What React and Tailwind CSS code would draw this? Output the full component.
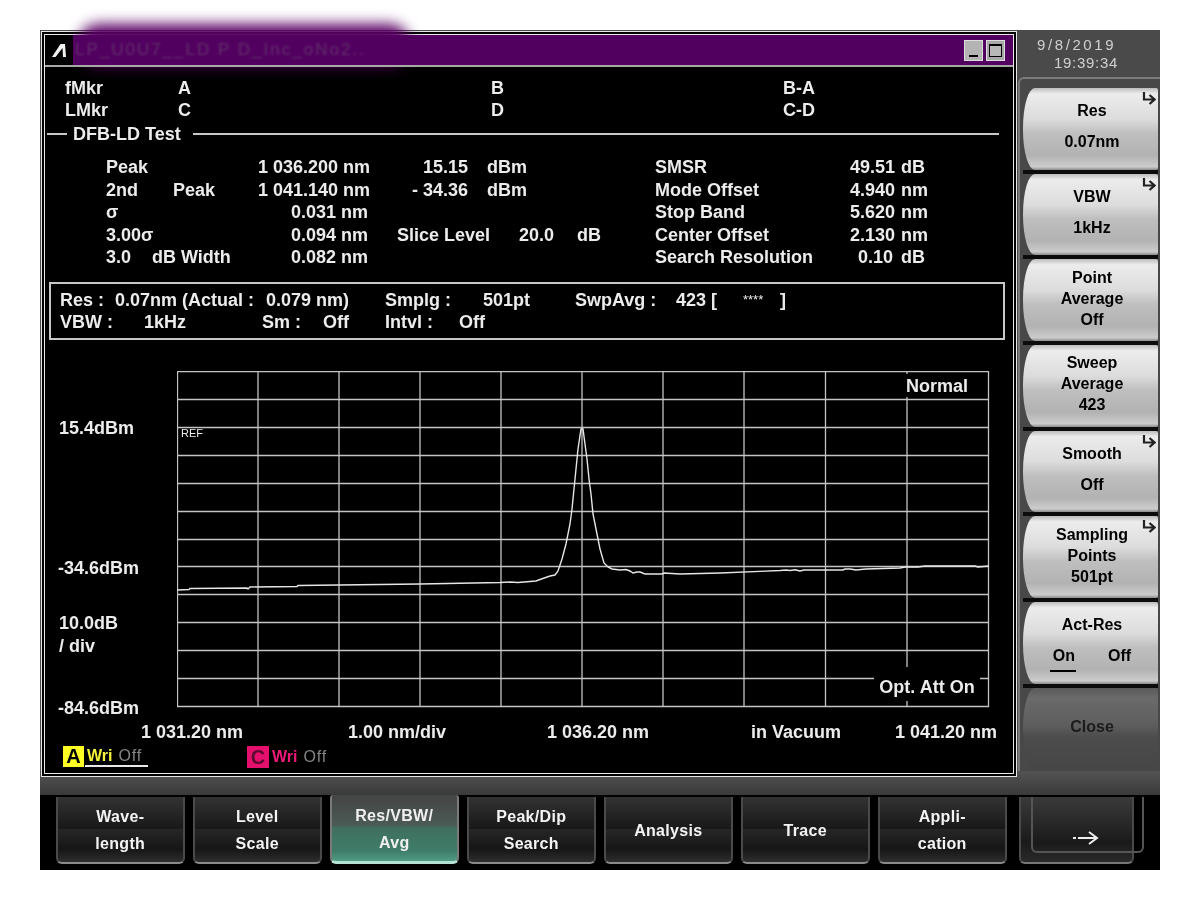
const rowsM = [
  { a: "Peak", b: "", v: "1 036.200 nm", n: "15.15", u: "dBm", l: "SMSR", r: "49.51", ru: "dB" },
  { a: "2nd", b: "Peak", v: "1 041.140 nm", n: "- 34.36", u: "dBm", l: "Mode Offset", r: "4.940", ru: "nm" },
  { a: "σ", b: "", v: "0.031 nm", n: "", u: "", l: "Stop Band", r: "5.620", ru: "nm" },
  { a: "3.00σ", b: "", v: "0.094 nm", slice: true, l: "Center Offset", r: "2.130", ru: "nm" },
  { a: "3.0", b2: "dB Width", v: "0.082 nm", n: "", u: "", l: "Search Resolution", r: "0.10", ru: "dB" },
];

const hLines = [372.5, 400.5, 428.5, 456.5, 484.5, 512.5, 540.5, 567.5, 595.5, 623.5, 651.5, 679.5, 707.5];
const vLines = [177.5, 258, 339, 420, 501, 582, 663, 744, 825.5, 907, 988.5];
const trace = "177,591 189,590.5 190,589.5 247,589 248,590 250,588 297,587.5 298,586.5 339,586 420,585 500,583.5 510,583 518,583.5 536,582 540,580.5 550,577 555,576 558,572 562,560 566,545 570,525 572,510 574,490 576,470 578,450 581,430 583,430 585,445 587,460 589,480 591,495 593,515 597,535 600,550 604,564 608,568 612,570 620,571 626,570.5 630,572 633,574 637,573 640,573 645,575 662,575 664,574 680,575 720,574 780,571.5 786,571 790,571.5 795,570.7 800,572 804,571 843,571 845,570 850,570 853,570.5 856,571 866,570 900,569 905,568 918,568 925,567 950,567 975,567 978,568 989,567";

function Hook() {
  return (
    <svg width="15" height="15" viewBox="0 0 15 15" className="absolute top-[3px] right-[2px]">
      <path d="M3 1 V8.5 H13 M8.5 4 L13.5 8.5 L8.5 13" fill="none" stroke="#222" strokeWidth="2.2" />
    </svg>
  );
}

function Key({ lines, hook, tight, children, dark }) {
  return (
    <div className={dark ? "h-[85.7px]" : "h-[85.7px] border-b-[4px] border-[#0c0c0c]"}>
      <div className={dark
        ? "relative h-[82px] flex flex-col items-center justify-center pl-[3px] pb-[4px] rounded-[12px_2px_2px_12px/40px_2px_2px_40px] bg-[linear-gradient(180deg,#5a5a5a_0%,#6a6a6a_12%,#5e5e5e_45%,#4c4c4c_60%,#464646_100%)] text-[#1c1c1c]"
        : "relative h-full flex flex-col items-center justify-center pl-[3px] pb-[4px] rounded-[12px_2px_2px_12px/40px_2px_2px_40px] bg-[linear-gradient(180deg,#bcbcbc_0%,#ececec_7%,#dcdcdc_38%,#bfbfbf_55%,#b2b2b2_82%,#cccccc_96%,#8c8c8c_100%)] text-black"}>
        {hook && <Hook />}
        {children || (lines || []).map((t) => (
          <div key={t} className={tight ? "leading-[21px]" : "leading-[22px] my-[4.5px]"}>{t}</div>
        ))}
      </div>
    </div>
  );
}

function Tab({ a, b }) {
  return (
    <div className="w-[128.5px] h-[67px] flex flex-col items-center justify-center gap-[5px] pt-[2px] rounded-b-[6px] border-x-2 border-b-2 border-x-[#4a4a4a] border-b-[#8a8a8a] bg-[linear-gradient(180deg,#333333_0%,#181818_49%,#262626_50%,#161616_80%,#2e2e2e_100%)] text-[#f4f4f4] tracking-[0.3px]">
      <div className="leading-[22px]">{a}</div>
      {b && <div className="leading-[22px]">{b}</div>}
    </div>
  );
}

export default function App() {
  return (
    <div className="w-[1200px] h-[900px] bg-white pt-[30px] pl-[40px] font-['Liberation_Sans',sans-serif] font-bold text-[16px] overflow-hidden">
      <div className="relative w-[1120px] h-[840px] flex flex-col bg-[#4a4a4a] blur-[0.35px]">
        <div className="absolute left-[38px] top-[-6px] w-[332px] h-[42px] rounded-[24px] bg-[#5a0064] blur-[7px] z-10" />
        <div className="flex h-[765px] bg-[linear-gradient(180deg,#4a4a4a_0%,#4a4a4a_92%,#5a5a5a_96%,#3a3a3a_100%)]">
          {/* window */}
          <div className="w-[976px] h-[746px] ml-px mt-px border-4 border-double border-[#e8e8e8] bg-black text-[#ececec] text-[18px]">
            <div className="relative z-20 h-[32px] flex border-b-2 border-[#a8a8a8]">
              <div className="w-[28px] flex items-center justify-center">
                <svg width="15" height="13" viewBox="0 0 15 13">
                  <polygon points="0,13 8.5,0 13,0 14,13 11,13 10.5,4 3.5,13" fill="#f2f2f2" />
                </svg>
              </div>
              <div className="flex-1 flex items-center justify-between bg-[#520060] pl-[2px] pr-[8px]">
                <span className="text-[#62306b] font-normal text-[17px] tracking-[2px] blur-[1.2px]">LP_U0U7__LD  P D_Inc_oNo2..</span>
                <div className="flex gap-[3px]">
                  <div className="w-[19px] h-[21px] bg-[#b4b4b4] border border-[#dddddd] flex items-end justify-center pb-[3px]">
                    <div className="w-[9px] h-[2px] bg-black" />
                  </div>
                  <div className="w-[19px] h-[21px] bg-[#a8a8a8] border border-[#dddddd] flex items-center justify-center">
                    <div className="w-[13px] h-[13px] border border-black border-t-2 bg-[#b8b8b8]" />
                  </div>
                </div>
              </div>
            </div>

            <div className="pt-[10px] pl-[20px] grid grid-cols-[113px_313px_292px_1fr] leading-[22px]">
              <div>fMkr</div><div>A</div><div>B</div><div>B-A</div>
              <div>LMkr</div><div>C</div><div>D</div><div>C-D</div>
            </div>

            <div className="mt-[2px] h-[22px] flex items-center leading-[22px] pl-[2px] pr-[14px]">
              <div className="w-[20px] h-[2px] bg-[#c8c8c8]" />
              <div className="ml-[6px]">DFB-LD Test</div>
              <div className="ml-[12px] flex-1 h-[2px] bg-[#c8c8c8]" />
            </div>

            <div className="mt-[11px] pl-[61px]">
              {rowsM.map((r) => (
                <div key={r.l} className="grid grid-cols-[67px_85px_110px_287px_195px_1fr] h-[22.5px] leading-[22.5px] whitespace-nowrap">
                  <div className="flex">
                    <span className={r.b2 ? "w-[46px] shrink-0" : ""}>{r.a}</span>
                    {r.b2 && <span>{r.b2}</span>}
                  </div>
                  <div>{r.b}</div>
                  <div className="text-right">{r.v}</div>
                  {r.slice ? (
                    <div className="flex pl-[29px]">
                      <span className="w-[122px]">Slice Level</span>
                      <span className="w-[58px]">20.0</span>
                      <span>dB</span>
                    </div>
                  ) : (
                    <div className="flex">
                      <span className="w-[100px] text-right">{r.n}</span>
                      <span className="ml-[19px]">{r.u}</span>
                    </div>
                  )}
                  <div>{r.l}</div>
                  <div className="flex">
                    <span className="w-[43px] text-right">{r.r}</span>
                    <span className="ml-[8px]">{r.ru}</span>
                  </div>
                </div>
              ))}
            </div>

            <div className="mt-[13px] ml-[4px] mr-[8px] h-[58px] border-2 border-[#c8c8c8] pt-[5px] pl-[9px] leading-[22px] whitespace-nowrap">
              <div className="flex h-[22px]">
                <span className="w-[55px]">Res :</span>
                <span className="w-[270px] flex">
                  <span className="w-[151px]">0.07nm (Actual :</span>
                  <span>0.079 nm)</span>
                </span>
                <span className="w-[98px]">Smplg :</span>
                <span className="w-[92px]">501pt</span>
                <span className="w-[101px]">SwpAvg :</span>
                <span className="w-[67px]">423 [</span>
                <span className="w-[37px] text-[13px] font-normal">****</span>
                <span>]</span>
              </div>
              <div className="flex h-[22px]">
                <span className="w-[84px]">VBW :</span>
                <span className="w-[118px]">1kHz</span>
                <span className="w-[61px]">Sm :</span>
                <span className="w-[62px]">Off</span>
                <span className="w-[74px]">Intvl :</span>
                <span>Off</span>
              </div>
            </div>

            <div className="mt-[31px] flex h-[350px]">
              <div className="w-[132px] pl-[14px] leading-[22px] whitespace-nowrap">
                <div className="mt-[46px]">15.4dBm</div>
                <div className="mt-[118px] -ml-px">-34.6dBm</div>
                <div className="mt-[33px]">10.0dB</div>
                <div className="mt-px">/ div</div>
                <div className="mt-[40px] -ml-px">-84.6dBm</div>
              </div>
              <div className="relative w-[814px] h-[337px]">
                <svg width="814" height="337" viewBox="177 372 814 337" className="block">
                  {hLines.map((y) => <line key={y} x1="177" x2="989" y1={y} y2={y} stroke="#c4c4c4" strokeWidth="1.3" />)}
                  {vLines.map((x) => <line key={x} x1={x} x2={x} y1="372" y2="708" stroke="#c4c4c4" strokeWidth="1.3" />)}
                  <polyline points={trace} fill="none" stroke="#e6e6e6" strokeWidth="1.4" />
                </svg>
                <div className="absolute left-[4px] top-[56px] text-[11px] font-normal leading-[13px]">REF</div>
                <div className="absolute left-[727px] top-[3px] w-[66px] h-[23px] bg-black leading-[25px] text-center">Normal</div>
                <div className="absolute left-[697px] top-[296px] w-[106px] h-[34px] bg-black leading-[40px] text-center">Opt. Att On</div>
              </div>
            </div>

            <div className="flex h-[22px] leading-[22px] whitespace-nowrap">
              <span className="ml-[96px] w-[207px]">1 031.20 nm</span>
              <span className="w-[199px]">1.00 nm/div</span>
              <span className="w-[204px]">1 036.20 nm</span>
              <span className="w-[144px]">in Vacuum</span>
              <span>1 041.20 nm</span>
            </div>

            <div className="mt-[3px] ml-[18px] flex items-start h-[22px]">
              <div className="w-[184px] flex">
                <div className="flex h-[21px] items-start">
                  <span className="w-[21px] h-[21px] bg-[#ffff26] text-black text-[20px] leading-[21px] text-center">A</span>
                  <div className="flex h-[21px] ml-[1px] pl-[2px] pr-[6px] border-b-2 border-[#e8e8e8]">
                    <span className="text-[#f4f43a] text-[16px] leading-[19px]">Wri</span>
                    <span className="ml-[6px] text-[#858585] text-[16px] leading-[19px] font-normal tracking-[0.8px]">Off</span>
                  </div>
                </div>
              </div>
              <span className="w-[22px] h-[22px] bg-[#e5106e] text-[#5a0a30] text-[20px] leading-[22px] text-center">C</span>
              <span className="ml-[3px] text-[#ee1a78] text-[16px] leading-[21px]">Wri</span>
              <span className="ml-[6px] text-[#858585] text-[16px] leading-[21px] font-normal tracking-[0.8px]">Off</span>
            </div>
          </div>

          {/* right panel */}
          <div className="flex-1 flex flex-col">
            <div className="h-[47px] pt-[6px] pl-[20px] font-normal text-[#d0d0d0] text-[15px] tracking-[0.7px] leading-[18px]">
              <div className="tracking-[2.6px]">9/8/2019</div>
              <div className="pl-[17px]">19:39:34</div>
            </div>
            <div className="ml-px pt-[9px] pl-[3px] pr-[2px] h-[694px] rounded-tl-[6px] border-t-2 border-l-2 border-[#7a7a7a] bg-[#484848]">
              <Key lines={["Res", "0.07nm"]} hook />
              <Key lines={["VBW", "1kHz"]} hook />
              <Key lines={["Point", "Average", "Off"]} tight />
              <Key lines={["Sweep", "Average", "423"]} tight />
              <Key lines={["Smooth", "Off"]} hook />
              <Key lines={["Sampling", "Points", "501pt"]} hook tight />
              <Key>
                <div className="leading-[22px] my-[4.5px]">Act-Res</div>
                <div className="flex gap-[33px] leading-[22px] my-[4.5px]">
                  <span className="relative">On<span className="absolute left-[-3px] right-[-1px] bottom-[-5px] h-[2px] bg-black" /></span>
                  <span>Off</span>
                </div>
              </Key>
              <Key lines={["Close"]} dark />
            </div>
          </div>
        </div>

        {/* bottom tabs */}
        <div className="flex-1 bg-black flex items-start pl-[16px] gap-[8.5px] pt-[2px]">
          <Tab a="Wave-" b="length" />
          <Tab a="Level" b="Scale" />
          <div className="w-[128.5px] h-[69px] -mt-[2px] flex flex-col items-center justify-center gap-[5px] pt-[2px] rounded-b-[6px] rounded-t-[3px] border-x-2 border-[#7a7a7a] border-b-[3px] border-b-[#b6e4d4] bg-[linear-gradient(180deg,#444444_0%,#4b5a54_45%,#3f6f5f_50%,#3f7d69_85%,#4f9a83_100%)] text-[#f0f0f0] tracking-[0.3px]">
            <div className="leading-[22px]">Res/VBW/</div>
            <div className="leading-[22px]">Avg</div>
          </div>
          <Tab a="Peak/Dip" b="Search" />
          <Tab a="Analysis" />
          <Tab a="Trace" />
          <Tab a="Appli-" b="cation" />
          <div className="relative ml-[4px] w-[115px] h-[67px] rounded-b-[6px] border-x-2 border-b-2 border-x-[#4a4a4a] border-b-[#777777] bg-[linear-gradient(180deg,#3a3a3a_0%,#1a1a1a_70%,#2a2a2a_100%)]">
            <div className="absolute left-[10px] top-0 w-[113px] h-[56px] rounded-b-[6px] border-x-2 border-b-2 border-[#555555]" />
            <svg width="28" height="16" viewBox="0 0 28 16" className="absolute left-[51px] top-[33px]">
              <path d="M1 8 H4 M6 8 H24 M17 2 L25 8 L17 14" fill="none" stroke="#eeeeee" strokeWidth="2" />
            </svg>
          </div>
        </div>
      </div>
    </div>
  );
}
